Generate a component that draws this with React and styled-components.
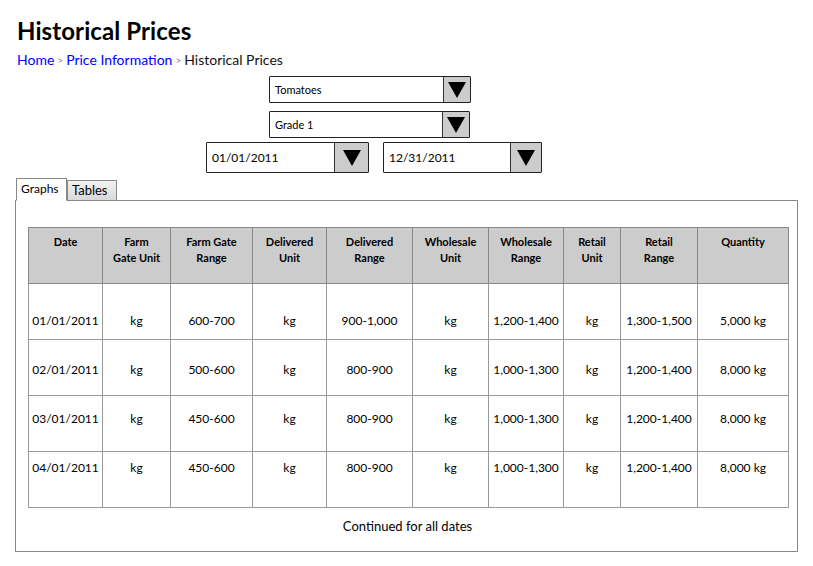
import React from "react";
import styled, { createGlobalStyle } from "styled-components";

const FONT = `"Comic Sans MS", "Lato", "DejaVu Sans", sans-serif`;

const columns = [
  { label: ["Date"], width: 74 },
  { label: ["Farm", "Gate Unit"], width: 68 },
  { label: ["Farm Gate", "Range"], width: 82 },
  { label: ["Delivered", "Unit"], width: 74 },
  { label: ["Delivered", "Range"], width: 86 },
  { label: ["Wholesale", "Unit"], width: 76 },
  { label: ["Wholesale", "Range"], width: 75 },
  { label: ["Retail", "Unit"], width: 57 },
  { label: ["Retail", "Range"], width: 77 },
  { label: ["Quantity"], width: 91 }
];

const rows = [
  ["01/01/2011", "kg", "600-700", "kg", "900-1,000", "kg", "1,200-1,400", "kg", "1,300-1,500", "5,000 kg"],
  ["02/01/2011", "kg", "500-600", "kg", "800-900", "kg", "1,000-1,300", "kg", "1,200-1,400", "8,000 kg"],
  ["03/01/2011", "kg", "450-600", "kg", "800-900", "kg", "1,000-1,300", "kg", "1,200-1,400", "8,000 kg"],
  ["04/01/2011", "kg", "450-600", "kg", "800-900", "kg", "1,000-1,300", "kg", "1,200-1,400", "8,000 kg"]
];

const Select = ({ value, width, height, arrow, size }) => (
  <SelectBox $width={width} $height={height}>
    <SelectText $size={size}>{value}</SelectText>
    <ArrowButton $width={arrow}>
      <Triangle />
    </ArrowButton>
  </SelectBox>
);

const App = () => {
  return (
    <Page>
      <GlobalStyle />
      <Title>Historical Prices</Title>
      <Breadcrumb>
        <Crumb>Home</Crumb>
        <Sep>&gt;</Sep>
        <Crumb>Price Information</Crumb>
        <Sep>&gt;</Sep>
        <Current>Historical Prices</Current>
      </Breadcrumb>

      <Controls>
        <Indented>
          <Select value="Tomatoes" width={202} height={27} arrow={26} size={11} />
        </Indented>
        <Indented $gap={8}>
          <Select value="Grade 1" width={201} height={27} arrow={26} size={11} />
        </Indented>
        <DateRow>
          <Select value="01/01/2011" width={163} height={31} arrow={33} size={12} />
          <Select value="12/31/2011" width={159} height={31} arrow={30} size={12} />
        </DateRow>
      </Controls>

      <Tabs>
        <Tab $active>Graphs</Tab>
        <Tab>Tables</Tab>
      </Tabs>
      <Panel>
        <Table>
          <colgroup>
            {columns.map((c, i) => (
              <col key={i} style={{ width: c.width }} />
            ))}
          </colgroup>
          <thead>
            <tr>
              {columns.map((c, i) => (
                <Th key={i}>
                  {c.label.map((l, j) => (
                    <div key={j}>{l}</div>
                  ))}
                </Th>
              ))}
            </tr>
          </thead>
          <tbody>
            {rows.map((r, i) => (
              <tr key={i}>
                {r.map((v, j) => (
                  <Td key={j} $offset={29 - i * 7}>
                    {v}
                  </Td>
                ))}
              </tr>
            ))}
          </tbody>
        </Table>
        <Continued>Continued for all dates</Continued>
      </Panel>
    </Page>
  );
};

const GlobalStyle = createGlobalStyle`
  body {
    margin: 0;
    background: #fff;
    font-family: ${FONT};
    color: #000;
  }
`;

const Page = styled.div`
  width: 813px;
  height: 566px;
  padding: 16px 0 0 15px;
  box-sizing: border-box;
  overflow: hidden;
`;

const Title = styled.h1`
  margin: 0 0 0 2px;
  font-size: 24px;
  font-weight: 700;
  line-height: 30px;
  letter-spacing: 0.1px;
`;

const Breadcrumb = styled.div`
  margin: 6px 0 0 2px;
  font-size: 14px;
  line-height: 16px;
  display: flex;
  align-items: center;
`;

const Crumb = styled.span`
  color: #0000ff;
`;

const Sep = styled.span`
  color: #777;
  font-size: 10px;
  margin: 0 3px;
`;

const Current = styled.span`
  color: #111;
`;

const Controls = styled.div`
  margin: 8px 0 0 191px;
  display: flex;
  flex-direction: column;
  align-items: flex-start;
`;

const Indented = styled.div`
  margin-left: 63px;
  margin-top: ${(p) => p.$gap || 0}px;
`;

const DateRow = styled.div`
  display: flex;
  gap: 14px;
  margin-top: 4px;
`;

const SelectBox = styled.div`
  width: ${(p) => p.$width}px;
  height: ${(p) => p.$height}px;
  box-sizing: border-box;
  border: 1.5px solid #222;
  border-radius: 1px;
  display: flex;
  background: #fff;
`;

const SelectText = styled.div`
  flex: 1;
  font-size: ${(p) => p.$size}px;
  display: flex;
  align-items: center;
  padding-left: 5px;
`;

const ArrowButton = styled.div`
  width: ${(p) => p.$width}px;
  background: #cccccc;
  border-left: 1.5px solid #333;
  display: flex;
  align-items: center;
  justify-content: center;
`;

const Triangle = styled.div`
  width: 0;
  height: 0;
  border-left: 9px solid transparent;
  border-right: 9px solid transparent;
  border-top: 16px solid #000;
`;

const Tabs = styled.div`
  margin-top: 5px;
  display: flex;
  align-items: flex-end;
  padding-left: 1px;
  position: relative;
  z-index: 1;
`;

const Tab = styled.div`
  box-sizing: border-box;
  height: ${(p) => (p.$active ? 23 : 20)}px;
  padding: ${(p) => (p.$active ? "2px 4px 0 4px" : "1px 4px 0 4px")};
  font-size: ${(p) => (p.$active ? 12 : 13)}px;
  border: 1px solid #888;
  border-bottom: ${(p) => (p.$active ? "1px solid #fff" : "none")};
  background: ${(p) => (p.$active ? "#fff" : "linear-gradient(#f2f2f2, #d8d8d8)")};
  margin-bottom: ${(p) => (p.$active ? -1 : 0)}px;
  width: ${(p) => (p.$active ? 51 : 50)}px;
`;

const Panel = styled.div`
  width: 783px;
  height: 352px;
  box-sizing: border-box;
  border: 1px solid #888;
  padding: 26px 8px 0 12px;
`;

const Table = styled.table`
  border-collapse: collapse;
  table-layout: fixed;
  width: 761px;
  border: 1px solid #777;
`;

const Th = styled.th`
  background: #cccccc;
  border: 1px solid #888;
  height: 56px;
  padding: 6px 2px 0 2px;
  box-sizing: border-box;
  vertical-align: top;
  font-size: 11px;
  font-weight: 700;
  line-height: 16px;
  text-align: center;
`;

const Td = styled.td`
  border: 1px solid #999;
  height: 56px;
  box-sizing: border-box;
  padding: ${(p) => p.$offset}px 0 0 0;
  vertical-align: top;
  font-size: 12px;
  line-height: 16px;
  text-align: center;
  white-space: nowrap;
`;

const Continued = styled.div`
  margin-top: 10px;
  text-align: center;
  font-size: 13px;
  line-height: 16px;
  padding-right: 2px;
`;

export default App;
